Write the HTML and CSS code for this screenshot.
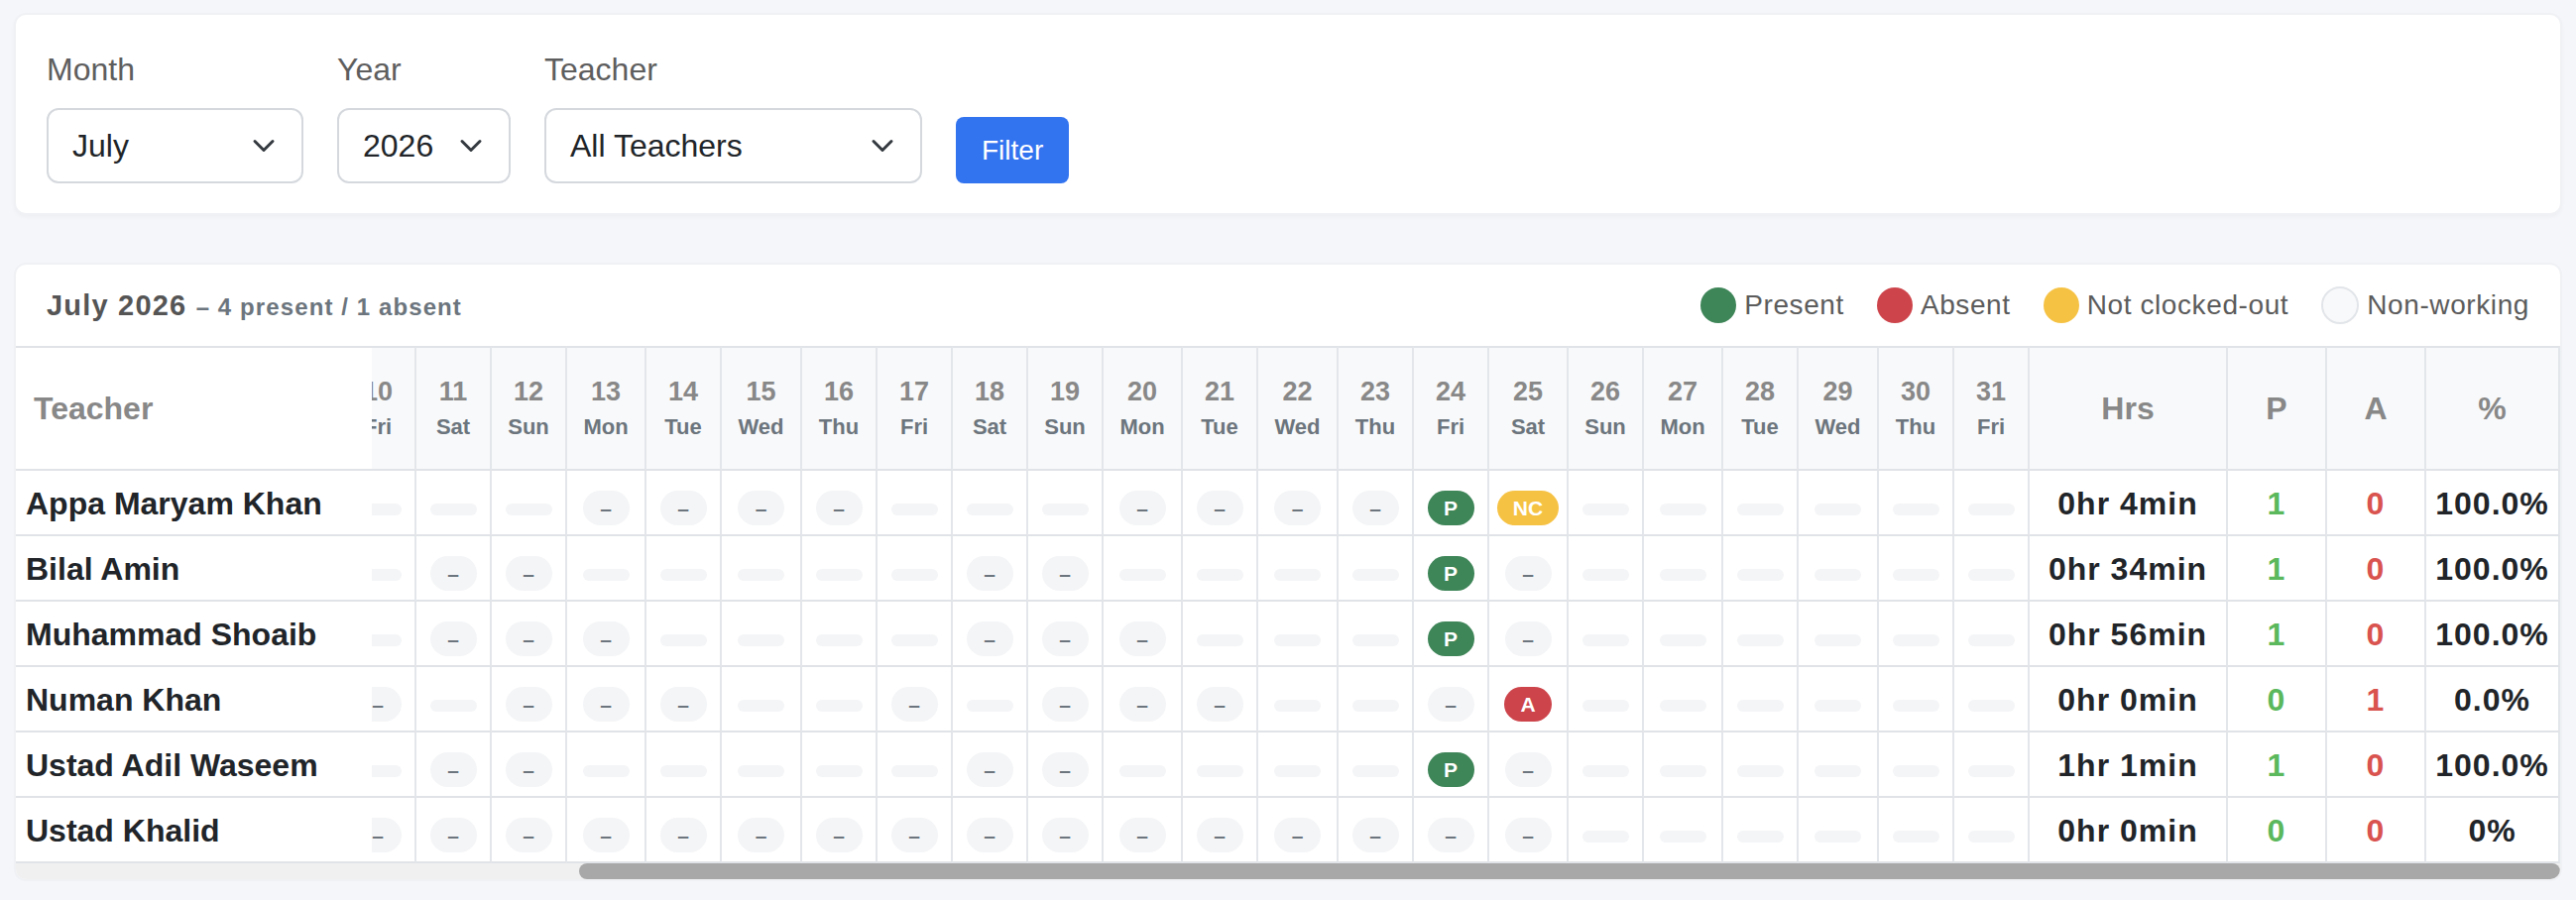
FILE: index.html
```html
<!DOCTYPE html>
<html lang="en">
<head>
    <meta charset="UTF-8" />
    <meta name="viewport" content="width=device-width, initial-scale=1" />
    <title>Teacher Attendance</title>
    <link rel="stylesheet" href="styles.css">
</head>
<body>
    <form class="filter-card" onsubmit="return false">
        <div class="field">
            <label>Month</label>
            <div class="select select-month">
                <span>July</span>
                <svg width="24" height="24" viewBox="0 0 16 16"><path d="m2 5 6 6 6-6" fill="none" stroke="#343a40" stroke-width="2" stroke-linecap="round" stroke-linejoin="round"/></svg>
            </div>
        </div>
        <div class="field">
            <label>Year</label>
            <div class="select select-year">
                <span>2026</span>
                <svg width="24" height="24" viewBox="0 0 16 16"><path d="m2 5 6 6 6-6" fill="none" stroke="#343a40" stroke-width="2" stroke-linecap="round" stroke-linejoin="round"/></svg>
            </div>
        </div>
        <div class="field">
            <label>Teacher</label>
            <div class="select select-teacher">
                <span>All Teachers</span>
                <svg width="24" height="24" viewBox="0 0 16 16"><path d="m2 5 6 6 6-6" fill="none" stroke="#343a40" stroke-width="2" stroke-linecap="round" stroke-linejoin="round"/></svg>
            </div>
        </div>
        <button class="btn-filter" type="submit">Filter</button>
    </form>

    <div class="report-card">
        <div class="card-head">
            <div class="summary">July 2026 <span class="summary-sub">– 4 present / 1 absent</span></div>
            <div class="legend">
                <span class="legend-item"><i class="dot dot-present"></i>Present</span>
                <span class="legend-item"><i class="dot dot-absent"></i>Absent</span>
                <span class="legend-item"><i class="dot dot-nc"></i>Not clocked-out</span>
                <span class="legend-item"><i class="dot dot-off"></i>Non-working</span>
            </div>
        </div>
        <div class="table-wrap" id="tableWrap">
            <table class="attendance" id="attendance"></table>
        </div>
        <div class="scroll-track">
            <div class="scroll-thumb" id="scrollThumb"></div>
        </div>
    </div>

    <script src="script.js"></script>
</body>
</html>
```

FILE: styles.css
```css
* {
    box-sizing: border-box;
}
body {
    margin: 0;
    padding: 13px 14px 0;
    background: #f5f6fa;
    font-family: "Liberation Sans", Arial, sans-serif;
    color: #212529;
}

/* filter bar */
.filter-card {
    display: flex;
    align-items: flex-end;
    gap: 34px;
    background: #fff;
    border: 2px solid #eff1f4;
    border-radius: 12px;
    padding: 31px 31px 30px;
    box-shadow: 0 2px 4px rgba(0, 0, 0, 0.03);
}
.field label {
    display: block;
    font-size: 32px;
    line-height: 48px;
    color: #5e5e5e;
    margin-bottom: 15px;
}
.select {
    display: flex;
    align-items: center;
    justify-content: space-between;
    height: 76px;
    border: 2px solid #d5d9de;
    border-radius: 12px;
    padding: 0 26px 0 24px;
    font-size: 32px;
    color: #212529;
    background: #fff;
}
.select-month { width: 259px; }
.select-year { width: 175px; }
.select-teacher { width: 381px; }
.btn-filter {
    height: 67px;
    padding: 0 26px;
    border: none;
    border-radius: 8px;
    background: #3273f0;
    color: #fff;
    font-family: inherit;
    font-size: 28px;
    cursor: pointer;
}

/* report card */
.report-card {
    margin-top: 48px;
    background: #fff;
    border: 2px solid #eff1f4;
    border-radius: 12px;
    overflow: hidden;
}
.card-head {
    display: flex;
    align-items: center;
    justify-content: space-between;
    height: 82px;
    padding: 0 31px;
}
.summary {
    font-size: 29px;
    font-weight: bold;
    letter-spacing: 1.2px;
    color: #555;
}
.summary-sub {
    font-size: 24px;
    letter-spacing: 1.1px;
    color: #6c757d;
}
.legend {
    display: flex;
    align-items: center;
    gap: 33px;
}
.legend-item {
    display: flex;
    align-items: center;
    gap: 8px;
    font-size: 28px;
    letter-spacing: 0.6px;
    color: #5c5c5c;
}
.dot {
    width: 36px;
    height: 36px;
    border-radius: 50%;
}
.dot-present { background: #3e8558; }
.dot-absent { background: #cd444b; }
.dot-nc { background: #f6c244; }
.dot-off {
    width: 38px;
    height: 38px;
    background: #f8f9fa;
    border: 2px solid #e2e5e9;
}

/* table */
.table-wrap {
    overflow-x: hidden;
}
.scroll-track {
    height: 16px;
    background: #f0f0f0;
}
.scroll-thumb {
    height: 16px;
    border-radius: 8px;
    background: #a8a8a8;
}
.attendance {
    border-collapse: separate;
    border-spacing: 0;
    width: max-content;
}
.col-teacher { width: 359px; }
.col-day { width: 76px; }
.col-mon { width: 80px; }
.col-wed { width: 81px; }
.col-hrs { width: 200px; }
.col-count { width: 100px; }
.col-pct { width: 135px; }

.attendance th,
.attendance td {
    padding: 0;
    text-align: center;
    vertical-align: middle;
    border-right: 2px solid #e3e6ea;
    border-bottom: 2px solid #e0e3e7;
    white-space: nowrap;
}
.attendance th {
    height: 126px;
    border-top: 2px solid #e0e3e7;
    background: #f8f9fa;
    font-weight: bold;
    font-size: 32px;
    color: #888;
}
.attendance td {
    height: 66px;
    font-size: 32px;
    font-weight: bold;
}
.attendance .sticky {
    position: sticky;
    left: 0;
    z-index: 1;
    background: #fff;
    border-right: none;
    text-align: left;
}
.attendance th.sticky {
    padding-left: 18px;
}
.attendance td.sticky {
    padding: 2px 0 0 10px;
    color: #212529;
}
.day-num {
    display: block;
    font-size: 27px;
    line-height: 34px;
    color: #888;
}
.day-name {
    display: block;
    margin-top: 4px;
    font-size: 22px;
    line-height: 30px;
    color: #6c757d;
}
.attendance td.day {
    padding-top: 10px;
}
.attendance td.stat {
    letter-spacing: 1px;
    padding-top: 2px;
}
.count-p { color: #5cb85c; }
.count-a { color: #d9534f; }

.badge {
    display: block;
    width: fit-content;
    min-width: 47px;
    margin: 0 auto;
    padding: 7px 16px;
    border-radius: 18px;
    font-size: 21px;
    line-height: 1;
    font-weight: bold;
    color: #fff;
}
.badge-none {
    background: #f4f5f7;
    color: #6c757d;
}
.badge-present { background: #3e8558; }
.badge-absent { background: #cd444b; }
.badge-nc { background: #f6c244; }
.pill-empty {
    display: block;
    width: 47px;
    height: 12px;
    margin: 4px auto 0;
    border-radius: 6px;
    background: #f4f5f7;
}
```

FILE: script.js
```js
const teachers = [
    { name: 'Appa Maryam Khan', marks: '--...----' + '...----...----PN......', hrs: '0hr 4min', p: 1, a: 0, pct: '100.0%' },
    { name: 'Bilal Amin', marks: '...--....' + '.--.....--....P-......', hrs: '0hr 34min', p: 1, a: 0, pct: '100.0%' },
    { name: 'Muhammad Shoaib', marks: '...---...' + '.---....---...P-......', hrs: '0hr 56min', p: 1, a: 0, pct: '100.0%' },
    { name: 'Numan Khan', marks: '..-.---.-' + '-.---..-.---..-A......', hrs: '0hr 0min', p: 0, a: 1, pct: '0.0%' },
    { name: 'Ustad Adil Waseem', marks: '...--....' + '.--.....--....P-......', hrs: '1hr 1min', p: 1, a: 0, pct: '100.0%' },
    { name: 'Ustad Khalid', marks: '---------' + '----------------......', hrs: '0hr 0min', p: 0, a: 0, pct: '0%' }
];

const dayNames = ['Sun', 'Mon', 'Tue', 'Wed', 'Thu', 'Fri', 'Sat'];
const year = 2026, month = 6;
const daysInMonth = new Date(year, month + 1, 0).getDate();

function badge(mark) {
    switch (mark) {
        case 'P': return '<span class="badge badge-present">P</span>';
        case 'A': return '<span class="badge badge-absent">A</span>';
        case 'N': return '<span class="badge badge-nc">NC</span>';
        case '-': return '<span class="badge badge-none">–</span>';
        default: return '<span class="pill-empty"></span>';
    }
}

function buildTable() {
    let cols = '<col class="col-teacher">';
    let head = '<th class="sticky">Teacher</th>';

    for (let d = 1; d <= daysInMonth; d++) {
        const wd = new Date(year, month, d).getDay();
        const hasNc = teachers.some(t => t.marks[d - 1] === 'N');
        let cls = 'col-day';
        if (wd === 3) cls = 'col-wed';
        else if (wd === 1 || hasNc) cls = 'col-mon';
        cols += `<col class="${cls}">`;
        head += `<th><span class="day-num">${d}</span><span class="day-name">${dayNames[wd]}</span></th>`;
    }

    cols += '<col class="col-hrs"><col class="col-count"><col class="col-count"><col class="col-pct">';
    head += '<th>Hrs</th><th>P</th><th>A</th><th>%</th>';

    const rows = teachers.map(t => {
        let cells = `<td class="sticky">${t.name}</td>`;
        for (let d = 0; d < daysInMonth; d++) {
            cells += `<td class="day">${badge(t.marks[d])}</td>`;
        }
        cells += `<td class="stat">${t.hrs}</td>`;
        cells += `<td class="stat count-p">${t.p}</td>`;
        cells += `<td class="stat count-a">${t.a}</td>`;
        cells += `<td class="stat">${t.pct}</td>`;
        return `<tr>${cells}</tr>`;
    }).join('');

    document.getElementById('attendance').innerHTML =
        `<colgroup>${cols}</colgroup><thead><tr>${head}</tr></thead><tbody>${rows}</tbody>`;
}

// scroll to the latest days and keep the bar in sync
function syncScroll() {
    const wrap = document.getElementById('tableWrap');
    const thumb = document.getElementById('scrollThumb');
    wrap.scrollLeft = wrap.scrollWidth;

    const track = wrap.clientWidth;
    const ratio = wrap.clientWidth / wrap.scrollWidth;
    thumb.style.width = Math.round(track * ratio) + 'px';
    thumb.style.marginLeft = Math.round(wrap.scrollLeft / wrap.scrollWidth * track) + 'px';
}

buildTable();
syncScroll();
```
